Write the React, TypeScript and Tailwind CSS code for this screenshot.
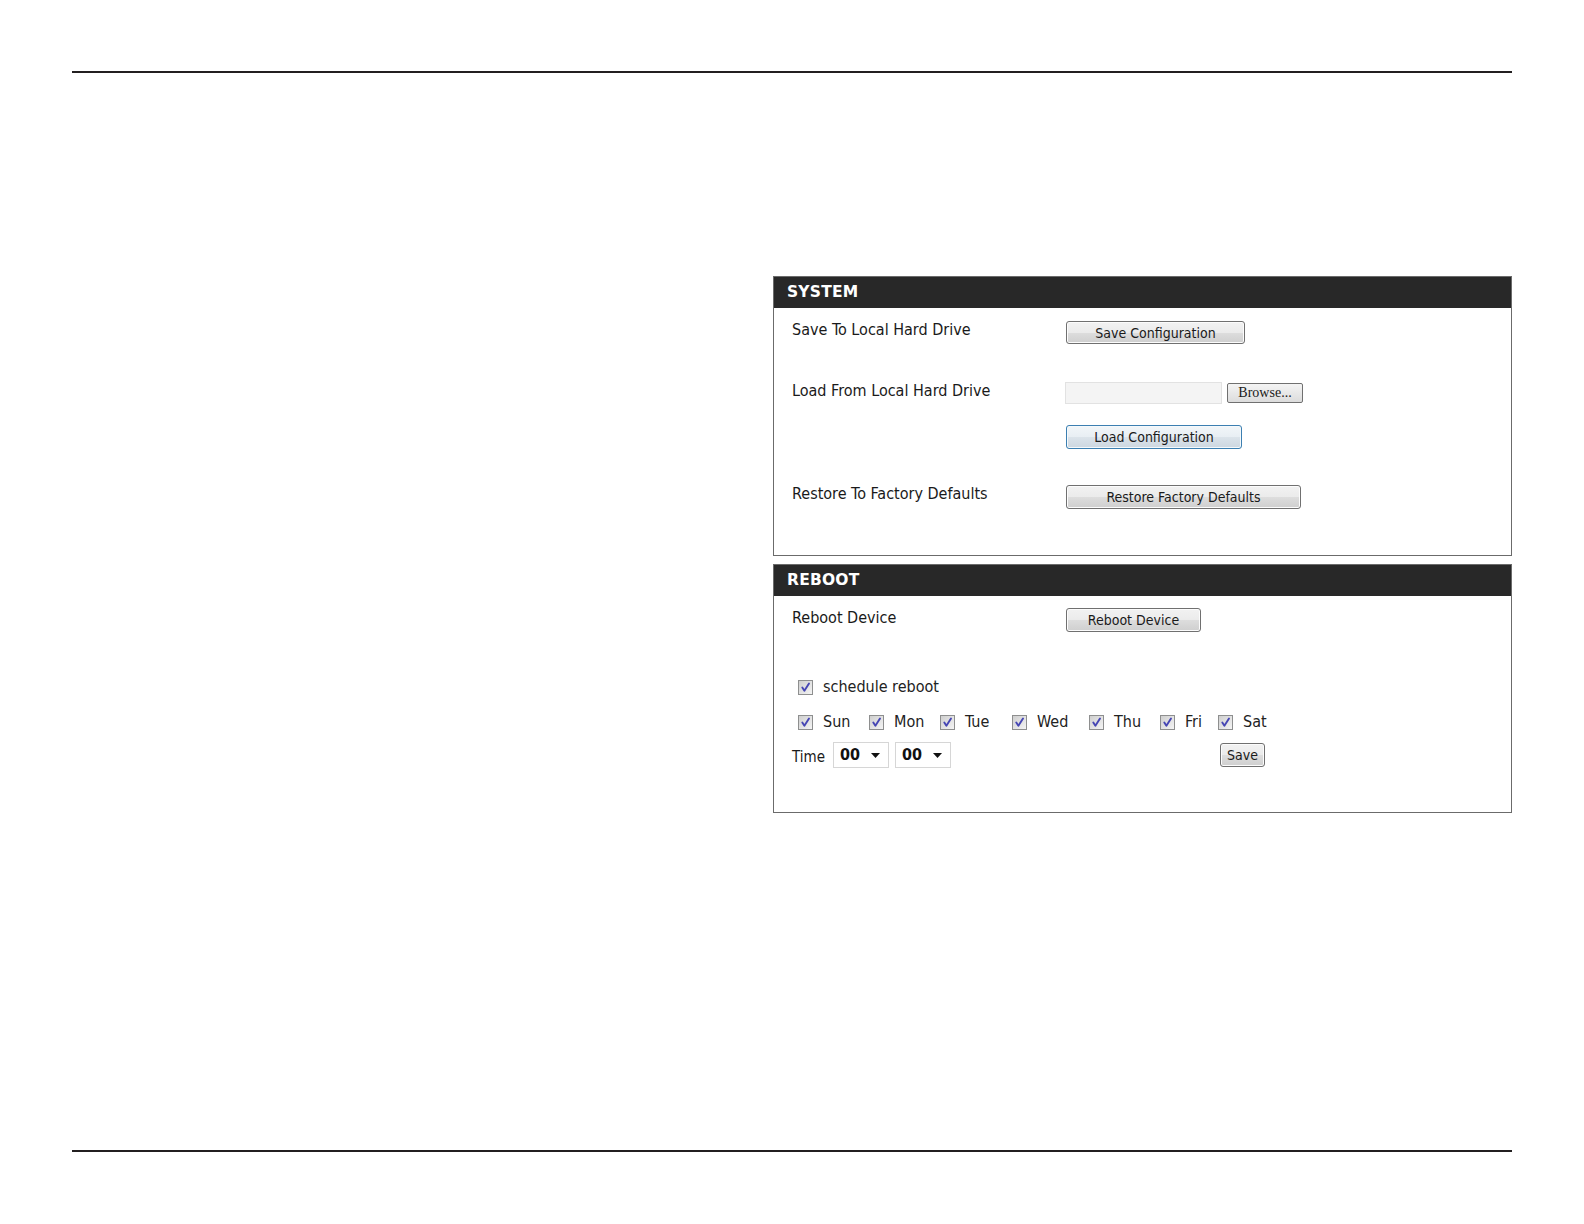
import React from 'react';

const LABEL_FONT = { fontFamily: '"DejaVu Sans Condensed", "DejaVu Sans", sans-serif' };

function WinButton({ children, className = '', focused = false }: { children: React.ReactNode; className?: string; focused?: boolean }) {
  return (
    <div
      className={`flex items-center justify-center rounded-[3px] border text-[14px] leading-none text-[#1a1a1a] ${
        focused
          ? 'border-[#3c7fb1] bg-[linear-gradient(#f2f6f9_0%,#e8eef3_50%,#dbe3ea_51%,#cdd7e0_100%)] shadow-[inset_0_0_0_1px_#f4f9fc]'
          : 'border-[#707070] bg-[linear-gradient(#f2f2f2_0%,#ebebeb_50%,#dddddd_51%,#cfcfcf_100%)] shadow-[inset_0_0_0_1px_#fcfcfc]'
      } ${className}`}
    >
      {children}
    </div>
  );
}

function CheckBox() {
  return (
    <span className="inline-flex h-[15px] w-[15px] shrink-0 items-center justify-center border border-[#8e8f8f] bg-[linear-gradient(135deg,#cfcfcf,#f4f4f4)]">
      <svg width="11" height="11" viewBox="0 0 11 11">
        <path d="M2.3 5.6 L4.4 8.8 L9 1.5" fill="none" stroke="#4646b4" strokeWidth="1.9" strokeLinecap="round" strokeLinejoin="round" />
      </svg>
    </span>
  );
}

function FakeSelect() {
  return (
    <div className="flex h-[26px] w-[56px] items-center justify-between border border-[#d6d6d6] bg-white pl-[6px] pr-[8px]">
      <span className="text-[16px] font-bold leading-none text-[#111]">00</span>
      <svg width="9" height="5" viewBox="0 0 9 5">
        <path d="M0 0 H9 L4.5 5 Z" fill="#111" />
      </svg>
    </div>
  );
}

function PanelHeader({ title }: { title: string }) {
  return (
    <div className="flex h-[31px] items-center bg-[#282828] pl-[13px]">
      <span className="text-[15.5px] font-bold tracking-[0.2px] text-white" style={{ fontFamily: '"DejaVu Sans", sans-serif' }}>
        {title}
      </span>
    </div>
  );
}

const days = [
  { name: 'Sun', w: 'w-[71px]' },
  { name: 'Mon', w: 'w-[71px]' },
  { name: 'Tue', w: 'w-[72px]' },
  { name: 'Wed', w: 'w-[77px]' },
  { name: 'Thu', w: 'w-[71px]' },
  { name: 'Fri', w: 'w-[58px]' },
  { name: 'Sat', w: 'w-[60px]' },
];

export default function App() {
  return (
    <div className="h-[1224px] w-[1584px] overflow-hidden bg-white text-[#1a1a1a]" style={LABEL_FONT}>
      <div className="h-[71px]" />
      <div className="ml-[72px] h-[2px] w-[1440px] bg-[#231f20]" />

      <div className="ml-[773px] mt-[203px] w-[739px]">
        {/* System */}
        <div className="border border-[#6b6b6b]">
          <PanelHeader title="SYSTEM" />
          <div className="h-[247px] pl-[18px] pt-[12px] text-[16px]">
            <div className="flex h-[61px]">
              <div className="w-[274px] leading-[20px]">Save To Local Hard Drive</div>
              <WinButton className="mt-[1px] h-[23px] w-[179px]">Save Configuration</WinButton>
            </div>
            <div className="flex h-[103px]">
              <div className="w-[273px] leading-[20px]">Load From Local Hard Drive</div>
              <div className="flex flex-col">
                <div className="mt-[1px] flex items-start">
                  <div className="h-[22px] w-[157px] border border-[#e2e2e2] bg-[#f4f4f4]" />
                  <div
                    className="ml-[5px] mt-[1px] flex h-[20px] w-[76px] items-center justify-center rounded-[2px] border border-[#707070] bg-[linear-gradient(#f4f4f4,#dcdcdc)] text-[14px] leading-none"
                    style={{ fontFamily: '"Liberation Serif", serif' }}
                  >
                    Browse...
                  </div>
                </div>
                <WinButton focused className="ml-[1px] mt-[21px] h-[24px] w-[176px]">Load Configuration</WinButton>
              </div>
            </div>
            <div className="flex">
              <div className="w-[274px] leading-[20px]">Restore To Factory Defaults</div>
              <WinButton className="mt-[1px] h-[24px] w-[235px]">Restore Factory Defaults</WinButton>
            </div>
          </div>
        </div>

        {/* Reboot */}
        <div className="mt-[8px] border border-[#6b6b6b]">
          <PanelHeader title="REBOOT" />
          <div className="h-[216px] pl-[18px] pt-[12px] text-[16px]">
            <div className="flex h-[69px]">
              <div className="w-[274px] leading-[20px]">Reboot Device</div>
              <WinButton className="h-[24px] w-[135px]">Reboot Device</WinButton>
            </div>
            <div className="flex h-[20px] items-center pl-[6px]">
              <CheckBox />
              <span className="ml-[10px] leading-[20px] text-[#222]">schedule reboot</span>
            </div>
            <div className="mt-[15px] flex h-[20px] items-center pl-[6px]">
              {days.map(d => (
                <div key={d.name} className={`flex items-center ${d.w}`}>
                  <CheckBox />
                  <span className="ml-[10px] leading-[20px] text-[#222]">{d.name}</span>
                </div>
              ))}
            </div>
            <div className="mt-[10px] flex items-center">
              <span className="w-[41px] pt-[3px] text-[15px] leading-[20px]">Time</span>
              <FakeSelect />
              <div className="ml-[6px]">
                <FakeSelect />
              </div>
              <WinButton className="ml-[269px] h-[24px] w-[45px]">Save</WinButton>
            </div>
          </div>
        </div>
      </div>

      <div className="ml-[72px] mt-[337px] h-[2px] w-[1440px] bg-[#231f20]" />
    </div>
  );
}
